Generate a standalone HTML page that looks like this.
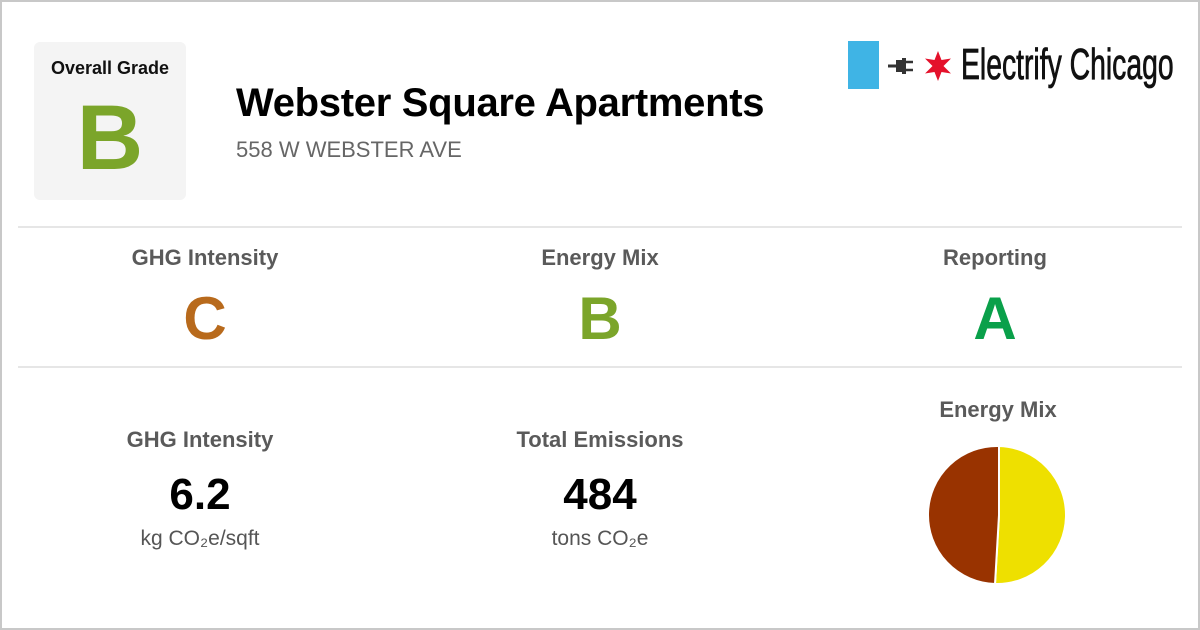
<!DOCTYPE html>
<html><head><meta charset="utf-8"><style>
*{margin:0;padding:0;box-sizing:border-box}
body{width:1200px;height:630px;background:#fff;font-family:"Liberation Sans",Arial,sans-serif;position:relative;overflow:hidden}
.frame{position:absolute;left:0;top:0;width:1200px;height:630px;border:2px solid #c8c8c8}
.abs{position:absolute;white-space:nowrap}
.c{text-align:center}
.lbl{font-weight:bold;color:#5a5a5a;font-size:22px}
.g{font-weight:bold;font-size:60px}
.hr{position:absolute;left:18px;width:1164px;height:2px;background:#e6e6e6}
</style></head><body>
<div class="frame"></div>
<div class="abs" style="left:34px;top:42px;width:152px;height:158px;background:#f4f4f4;border-radius:6px"></div>
<div class="abs c" style="left:34px;top:58px;width:152px;font-size:18px;font-weight:bold;color:#111">Overall Grade</div>
<div class="abs c" style="left:34px;top:85px;width:152px;font-size:92px;font-weight:bold;color:#7ba52a;line-height:106px">B</div>
<div class="abs" style="left:236px;top:81px;font-size:40px;letter-spacing:-0.3px;font-weight:bold;color:#000">Webster Square Apartments</div>
<div class="abs" style="left:236px;top:137px;font-size:22px;color:#666">558 W WEBSTER AVE</div>
<div class="abs" style="left:848px;top:41px;width:31px;height:48px;background:#3fb4e5"></div>
<svg class="abs" style="left:888px;top:54px" width="32" height="24" viewBox="0 0 32 24">
<path d="M0 12h8" stroke="#333" stroke-width="3"/><path d="M8 6h6v12h-6z" fill="#333"/><path d="M14 4h4v16h-4z" fill="#333"/><path d="M18 8h7M18 16h7" stroke="#333" stroke-width="2.5"/></svg>
<svg class="abs" style="left:922px;top:50px" width="32" height="32" viewBox="-16 -16 32 32">
<polygon fill="#e4112b" points="0,-15 3.5,-6 13,-7.5 5.5,0 13,7.5 3.5,6 0,15 -3.5,6 -13,7.5 -5.5,0 -13,-7.5 -3.5,-6"/></svg>
<div class="abs" style="left:961px;top:40px;font-size:44px;color:#111;-webkit-text-stroke:0.8px #111;transform:scaleX(0.644);transform-origin:left top;font-family:'Liberation Sans Narrow','Liberation Sans',sans-serif">Electrify Chicago</div>
<div class="hr" style="top:226px"></div>
<div class="hr" style="top:366px"></div>
<div class="abs c lbl" style="left:105px;top:245px;width:200px">GHG Intensity</div>
<div class="abs c lbl" style="left:500px;top:245px;width:200px">Energy Mix</div>
<div class="abs c lbl" style="left:895px;top:245px;width:200px">Reporting</div>
<div class="abs c g" style="left:105px;top:284px;width:200px;color:#b86a1c">C</div>
<div class="abs c g" style="left:500px;top:284px;width:200px;color:#7ba52a">B</div>
<div class="abs c g" style="left:895px;top:284px;width:200px;color:#0aa04a">A</div>
<div class="abs c lbl" style="left:100px;top:427px;width:200px">GHG Intensity</div>
<div class="abs c lbl" style="left:500px;top:427px;width:200px">Total Emissions</div>
<div class="abs c lbl" style="left:898px;top:397px;width:200px">Energy Mix</div>
<div class="abs c" style="left:100px;top:470px;width:200px;font-size:44px;font-weight:bold;color:#000">6.2</div>
<div class="abs c" style="left:500px;top:470px;width:200px;font-size:44px;font-weight:bold;color:#000">484</div>
<div class="abs c" style="left:100px;top:527px;width:200px;font-size:21px;color:#555">kg CO₂e/sqft</div>
<div class="abs c" style="left:500px;top:527px;width:200px;font-size:21px;color:#555">tons CO₂e</div>
<svg class="abs" style="left:928px;top:444px" width="142" height="142" viewBox="0 0 142 142">
<path d="M71 71 L71 2 A69 69 0 0 1 67 140 Z" fill="#eee000" stroke="#fff" stroke-width="2"/>
<path d="M71 71 L67 140 A69 69 0 0 1 71 2 Z" fill="#993300" stroke="#fff" stroke-width="2"/>
</svg>
</body></html>
